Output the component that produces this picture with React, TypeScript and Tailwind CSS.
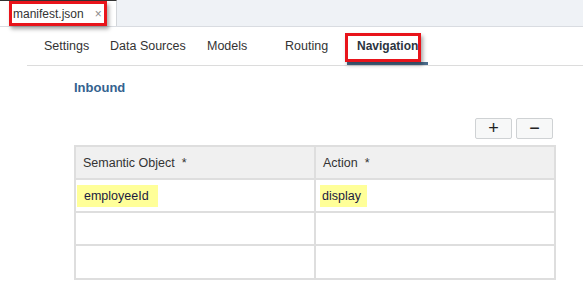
import React from "react";

const tabs = [
  { label: "Settings", w: "w-[66px]" },
  { label: "Data Sources", w: "w-[97px]" },
  { label: "Models", w: "w-[78px]" },
  { label: "Routing", w: "w-[62px]" },
];

function RedBox({ className }: { className: string }) {
  return (
    <div
      className={`pointer-events-none absolute border-[3px] border-[#e8141b] shadow-[2px_3px_4px_rgba(0,0,0,0.35)] ${className}`}
    />
  );
}

export default function App() {
  return (
    <div className="h-[291px] w-[583px] overflow-hidden bg-white font-['Liberation_Sans',Arial,sans-serif] text-[#333]">
      {/* editor tab strip */}
      <div className="flex h-[27px] border-b border-[#d9dce1] bg-[#eff2f6]">
        <div className="relative flex w-[117px] items-center border-t border-r border-t-[#333] border-r-[#d3d6da] bg-white pl-[13px]">
          <span className="text-[12px] text-[#333]">manifest.json</span>
          <span className="ml-[11px] text-[12px] text-[#8a8a8a]">×</span>
          <RedBox className="left-[9px] top-0 h-[25px] w-[98px]" />
        </div>
      </div>

      {/* descriptor tabs */}
      <div className="ml-[27px] flex h-[39px] border-b border-[#dcdcdc] pl-[17px]">
        {tabs.map((t) => (
          <div key={t.label} className={`flex items-center ${t.w}`}>
            <span className="text-[12.5px] text-[#333]">{t.label}</span>
          </div>
        ))}
        <div className="relative flex w-[81px] items-center border-b-[3px] border-[#4b6d8d] pl-[10px] pt-[2px]">
          <span className="text-[12px] font-bold text-[#2b3440]">Navigation</span>
          <RedBox className="left-[-2px] top-[6px] h-[29px] w-[76px]" />
        </div>
      </div>

      {/* content */}
      <div className="pl-[74px] pr-[27px]">
        <div className="mt-[12px] text-[13px] font-bold text-[#34628f]">Inbound</div>

        <div className="mt-[20px] flex justify-end gap-[4px] pr-[3px]">
          <button className="flex h-[21px] w-[37px] items-center justify-center rounded-[2px] border border-[#cfd2d4] bg-[#f7f8f8] text-[18px] leading-none text-[#222]">
            +
          </button>
          <button className="flex h-[21px] w-[37px] items-center justify-center rounded-[2px] border border-[#cfd2d4] bg-[#f7f8f8] text-[18px] leading-none text-[#222]">
            −
          </button>
        </div>

        <div className="mt-[6px] grid w-[482px] grid-cols-[240px_1fr] border-2 border-[#dedede] text-[12.5px]">
          <div className="flex h-[33px] items-center border-r-2 border-b-2 border-[#dedede] bg-[#f0f0f0] pl-[7px] pt-[2px]">
            Semantic Object&nbsp;&nbsp;*
          </div>
          <div className="flex h-[33px] items-center border-b-2 border-[#dedede] bg-[#f0f0f0] pl-[7px] pt-[2px]">
            Action&nbsp;&nbsp;*
          </div>

          <div className="flex h-[33px] items-center border-r-2 border-b-2 border-[#dedede] pl-[1px] pt-[2px]">
            <span className="bg-[#ffff99] py-[2px] pr-[9px] pl-[7px] text-[#1a1a40]">employeeId</span>
          </div>
          <div className="flex h-[33px] items-center border-b-2 border-[#dedede] pl-[4px] pt-[2px]">
            <span className="bg-[#ffff99] py-[2px] pr-[6px] pl-[2px] text-[#1a1a40]">display</span>
          </div>

          <div className="h-[33px] border-r-2 border-b-2 border-[#dedede]" />
          <div className="h-[33px] border-b-2 border-[#dedede]" />
          <div className="h-[32px] border-r-2 border-[#dedede]" />
          <div className="h-[32px]" />
        </div>
      </div>
    </div>
  );
}
